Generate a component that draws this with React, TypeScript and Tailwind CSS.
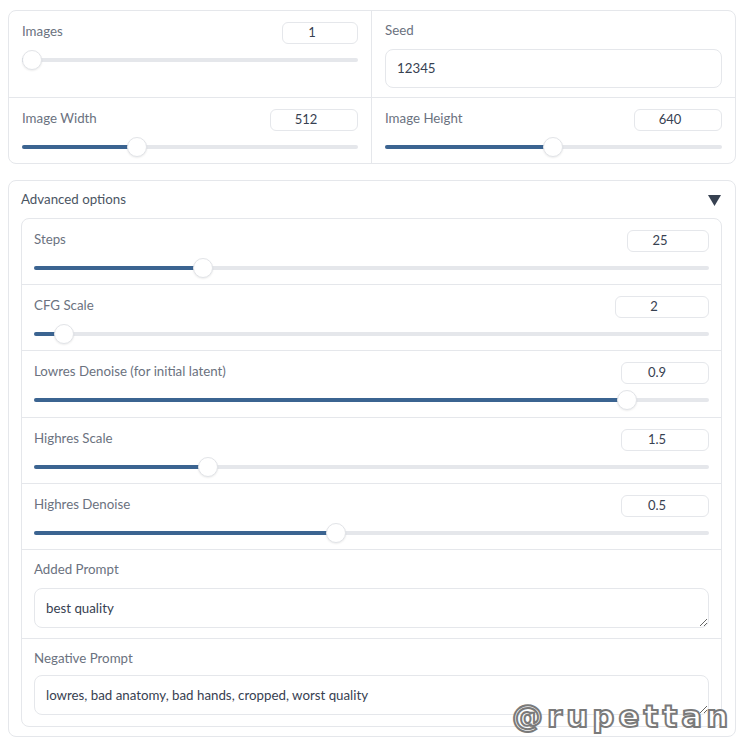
import React from 'react';

const font = { fontFamily: 'Lato, "Noto Sans", sans-serif' };

type SliderProps = { value: number };

const Slider: React.FC<SliderProps> = ({ value }) => (
    <div className="relative mt-[6px] h-5">
        <div className="absolute left-0 right-0 top-[8px] h-1 rounded-full bg-[#e5e7eb]" />
        <div
            className="absolute left-0 top-[8px] h-1 rounded-full bg-[#3b6491]"
            style={{ width: `calc(10px + (100% - 20px) * ${value})` }}
        />
        <div
            className="absolute top-0 h-5 w-5 rounded-full border border-[#e2e4e8] bg-white shadow-[0_1px_2px_rgba(0,0,0,0.08)]"
            style={{ left: `calc((100% - 20px) * ${value})` }}
        />
    </div>
);

type FieldProps = { label: string; value: string; inputWidth: string; pos: number; pb?: string };

const SliderField: React.FC<FieldProps> = ({ label, value, inputWidth, pos, pb }) => (
    <div className={`pt-[11px] ${pb ?? 'pb-[6px]'}`}>
        <div className="flex h-[22px] items-center justify-between">
            <span className="text-[13.3px] leading-none text-[#6b7280] -mt-[3px]">{label}</span>
            <div
                className={`flex h-[22px] items-center justify-center rounded-md border border-[#e5e7eb] bg-white pr-[16px] text-[13px] text-[#374151] ${inputWidth}`}
            >
                {value}
            </div>
        </div>
        <Slider value={pos} />
    </div>
);

type PromptProps = { label: string; value: string; gap: string; pb: string };

const PromptField: React.FC<PromptProps> = ({ label, value, gap, pb }) => (
    <div className={`border-t border-[#e5e7eb] px-[12px] pt-[10px] ${pb}`}>
        <div className="h-[18px] text-[13.3px] leading-[18px] text-[#6b7280]">{label}</div>
        <textarea
            readOnly
            value={value}
            rows={1}
            className={`block h-[40px] w-full rounded-lg border border-[#e5e7eb] bg-white px-[11px] py-[9px] text-[13.3px] leading-[20px] text-[#374151] outline-none ${gap}`}
            style={font}
        />
    </div>
);

const App: React.FC = () => {
    return (
        <div className="relative min-h-[748px] bg-white pt-[10px] pl-2 pr-3" style={font}>
            {/* top settings */}
            <div className="grid grid-cols-2 rounded-lg border border-[#e5e7eb] bg-white">
                <div className="border-r border-b border-[#e5e7eb] px-[13px]">
                    <SliderField label="Images" value="1" inputWidth="w-[76px]" pos={0} />
                </div>
                <div className="border-b border-[#e5e7eb] px-[13px] pt-[11px] pb-[9px]">
                    <div className="h-[22px] text-[13.3px] leading-[16px] text-[#6b7280]">Seed</div>
                    <div className="mt-[5px] flex h-[39px] items-center rounded-lg border border-[#e5e7eb] px-[11px] text-[13.3px] text-[#374151]">
                        12345
                    </div>
                </div>
                <div className="border-r border-[#e5e7eb] px-[13px]">
                    <SliderField label="Image Width" value="512" inputWidth="w-[88px]" pos={0.333} />
                </div>
                <div className="px-[13px]">
                    <SliderField label="Image Height" value="640" inputWidth="w-[88px]" pos={0.498} />
                </div>
            </div>

            {/* advanced */}
            <div className="mt-[16px] rounded-lg border border-[#e5e7eb] bg-white pl-[12px] pr-[13px] pt-[10px] pb-[9px]">
                <div className="flex h-[18px] items-center justify-between">
                    <span className="text-[13.3px] text-[#4b5563]">Advanced options</span>
                    <svg width="13" height="11" viewBox="0 0 13 11" className="mr-[1px]">
                        <polygon points="0,0 13,0 6.5,11" fill="#374151" />
                    </svg>
                </div>
                <div className="mt-[9px] rounded-lg border border-[#e5e7eb]">
                    <div className="px-[12px]">
                        <SliderField label="Steps" value="25" inputWidth="w-[82px]" pos={0.243} />
                    </div>
                    <div className="border-t border-[#e5e7eb] px-[12px]">
                        <SliderField label="CFG Scale" value="2" inputWidth="w-[94px]" pos={0.03} />
                    </div>
                    <div className="border-t border-[#e5e7eb] px-[12px]">
                        <SliderField label="Lowres Denoise (for initial latent)" value="0.9" inputWidth="w-[88px]" pos={0.89} pb="pb-[7px]" />
                    </div>
                    <div className="border-t border-[#e5e7eb] px-[12px]">
                        <SliderField label="Highres Scale" value="1.5" inputWidth="w-[88px]" pos={0.25} />
                    </div>
                    <div className="border-t border-[#e5e7eb] px-[12px]">
                        <SliderField label="Highres Denoise" value="0.5" inputWidth="w-[88px]" pos={0.446} />
                    </div>
                    <PromptField label="Added Prompt" value="best quality" gap="mt-[10px]" pb="pb-[10px]" />
                    <PromptField
                        label="Negative Prompt"
                        value="lowres, bad anatomy, bad hands, cropped, worst quality"
                        gap="mt-[8px]"
                        pb="pb-[11px]"
                    />
                </div>
            </div>

            {/* watermark */}
            <span
                className="pointer-events-none absolute left-[512px] top-[693px] text-[31px] font-bold tracking-[4px] text-white [-webkit-text-stroke:2px_#7a7a7a]"
                style={{ fontFamily: '"DejaVu Sans", sans-serif' }}
            >
                @rupettan
            </span>
        </div>
    );
};

export default App;
